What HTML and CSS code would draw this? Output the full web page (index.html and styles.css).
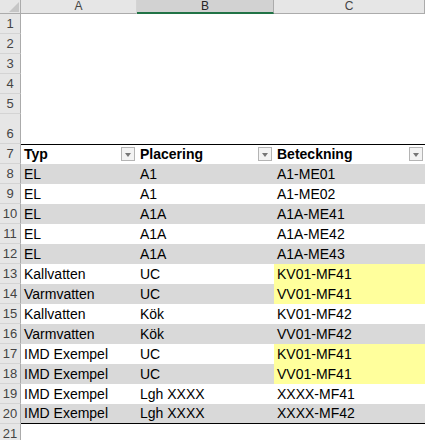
FILE: index.html
```html
<!DOCTYPE html>
<html lang="sv">
<head>
    <meta charset="UTF-8">
    <title>Blad1</title>
    <link rel="stylesheet" href="styles.css">
</head>
<body>
    <div class="sheet">
        <div class="corner"><svg width="12" height="12" viewBox="0 0 12 12"><polygon points="11,1 11,11 1,11" fill="#c6c6c6"/></svg></div>
        <div class="col-head">A</div>
        <div class="col-head selected">B</div>
        <div class="col-head last">C</div>

        <div class="row-head">1</div><div class="cell"></div><div class="cell"></div><div class="cell"></div>
        <div class="row-head">2</div><div class="cell"></div><div class="cell"></div><div class="cell"></div>
        <div class="row-head">3</div><div class="cell"></div><div class="cell"></div><div class="cell"></div>
        <div class="row-head">4</div><div class="cell"></div><div class="cell"></div><div class="cell"></div>
        <div class="row-head">5</div><div class="cell"></div><div class="cell"></div><div class="cell"></div>
        <div class="row-head">6</div><div class="cell"></div><div class="cell"></div><div class="cell"></div>

        <div class="row-head">7</div>
        <div class="cell th">Typ<span class="filter"></span></div>
        <div class="cell th">Placering<span class="filter"></span></div>
        <div class="cell th">Beteckning<span class="filter"></span></div>

        <div class="row-head">8</div><div class="cell band">EL</div><div class="cell band">A1</div><div class="cell band">A1-ME01</div>
        <div class="row-head">9</div><div class="cell">EL</div><div class="cell">A1</div><div class="cell">A1-ME02</div>
        <div class="row-head">10</div><div class="cell band">EL</div><div class="cell band">A1A</div><div class="cell band">A1A-ME41</div>
        <div class="row-head">11</div><div class="cell">EL</div><div class="cell">A1A</div><div class="cell">A1A-ME42</div>
        <div class="row-head">12</div><div class="cell band">EL</div><div class="cell band">A1A</div><div class="cell band">A1A-ME43</div>
        <div class="row-head">13</div><div class="cell">Kallvatten</div><div class="cell">UC</div><div class="cell mark">KV01-MF41</div>
        <div class="row-head">14</div><div class="cell band">Varmvatten</div><div class="cell band">UC</div><div class="cell mark">VV01-MF41</div>
        <div class="row-head">15</div><div class="cell">Kallvatten</div><div class="cell">Kök</div><div class="cell">KV01-MF42</div>
        <div class="row-head">16</div><div class="cell band">Varmvatten</div><div class="cell band">Kök</div><div class="cell band">VV01-MF42</div>
        <div class="row-head">17</div><div class="cell">IMD Exempel</div><div class="cell">UC</div><div class="cell mark">KV01-MF41</div>
        <div class="row-head">18</div><div class="cell band">IMD Exempel</div><div class="cell band">UC</div><div class="cell mark">VV01-MF41</div>
        <div class="row-head">19</div><div class="cell">IMD Exempel</div><div class="cell">Lgh XXXX</div><div class="cell">XXXX-MF41</div>
        <div class="row-head">20</div><div class="cell band end">IMD Exempel</div><div class="cell band end">Lgh XXXX</div><div class="cell band end">XXXX-MF42</div>

        <div class="row-head">21</div><div class="cell"></div><div class="cell"></div><div class="cell"></div>
    </div>
</body>
</html>
```

FILE: styles.css
```css
body {
    margin: 0;
    background: #fff;
    font-family: "Liberation Sans", Arial, sans-serif;
}
.sheet {
    display: grid;
    grid-template-columns: 21px 116px 137px 151px;
    grid-template-rows: 14px repeat(5, 20px) 30px repeat(15, 20px);
    width: 426px;
}
.corner {
    background: #e6e6e6;
    border-right: 1px solid #ababab;
    border-bottom: 1px solid #ababab;
    box-sizing: border-box;
    display: flex;
    justify-content: flex-end;
    align-items: flex-end;
    overflow: hidden;
}
.col-head {
    background: #e6e6e6;
    border-right: 1px solid #d4d4d4;
    border-bottom: 1px solid #ababab;
    box-sizing: border-box;
    color: #444;
    font-size: 12px;
    line-height: 13px;
    text-align: center;
}
.col-head.selected {
    background: #d2d2d2;
    color: #262626;
    border-bottom: 2px solid #217346;
    border-right-color: #ababab;
}
.col-head.last {
    border-right-color: #ababab;
}
.row-head {
    background: #e6e6e6;
    border-right: 1px solid #ababab;
    border-bottom: 1px solid #d4d4d4;
    box-sizing: border-box;
    color: #444;
    font-size: 13px;
    display: flex;
    justify-content: center;
    align-items: flex-end;
    padding-bottom: 2px;
}
.cell {
    position: relative;
    font-size: 14px;
    color: #000;
    padding-left: 3px;
    line-height: 20px;
    white-space: nowrap;
    overflow: hidden;
}
.th {
    font-weight: bold;
    border-top: 1px solid #000;
    line-height: 19px;
}
.band {
    background: #d9d9d9;
}
.mark {
    background: #ffff9c;
}
.end {
    border-bottom: 1px solid #000;
    line-height: 19px;
}
.filter {
    position: absolute;
    right: 2px;
    top: 2px;
    width: 14px;
    height: 14px;
    box-sizing: border-box;
    border: 1px solid #b4b4b4;
    background: #f3f3f3;
}
.filter::after {
    content: "";
    position: absolute;
    left: 3px;
    top: 5px;
    border-left: 3.5px solid transparent;
    border-right: 3.5px solid transparent;
    border-top: 4px solid #767676;
}
```
